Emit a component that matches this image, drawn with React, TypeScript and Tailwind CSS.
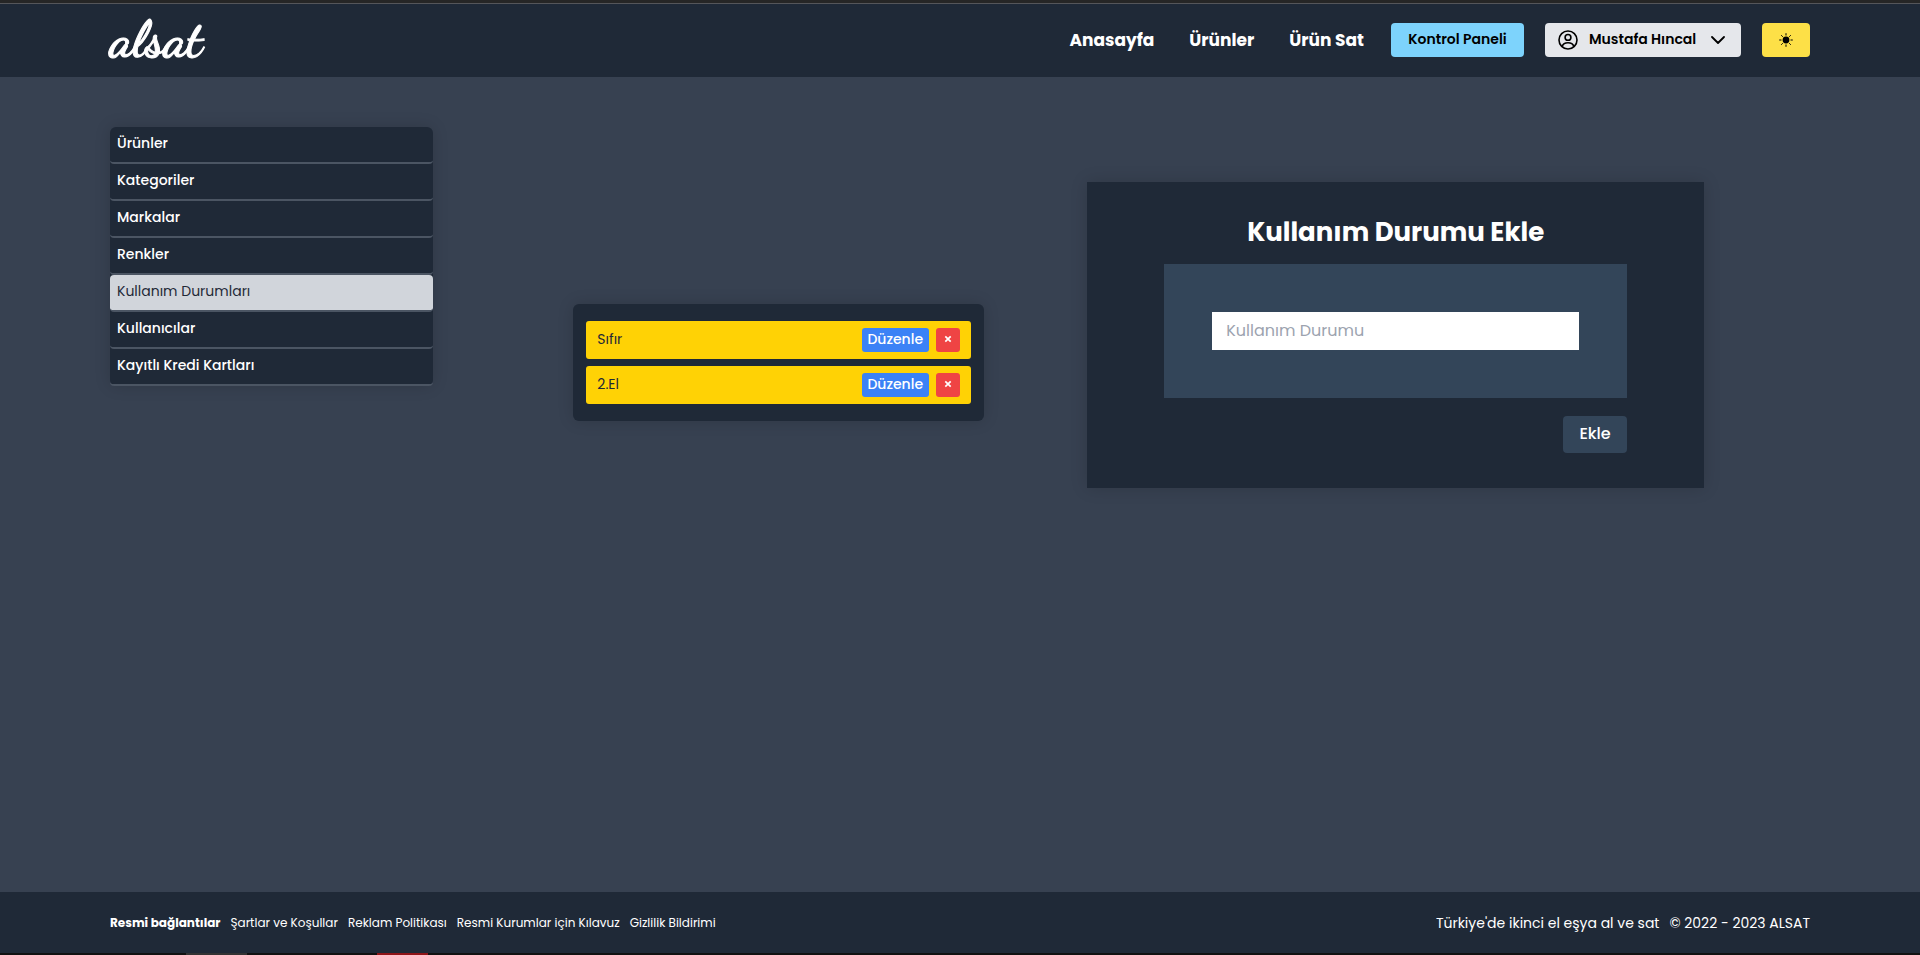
const menu = [
  'Ürünler',
  'Kategoriler',
  'Markalar',
  'Renkler',
  'Kullanım Durumları',
  'Kullanıcılar',
  'Kayıtlı Kredi Kartları',
];
const activeItem = 'Kullanım Durumları';
const navLinks = ['Anasayfa', 'Ürünler', 'Ürün Sat'];
const conditions = ['Sıfır', '2.El'];
const officialLinks = [
  'Şartlar ve Koşullar',
  'Reklam Politikası',
  'Resmi Kurumlar için Kılavuz',
  'Gizlilik Bildirimi',
];

function UserIcon() {
  return (
    <svg viewBox="0 0 20 20" className="size-5 shrink-0" fill="none" stroke="currentColor" strokeWidth="1.6" aria-hidden="true">
      <circle cx="10" cy="10" r="9" />
      <circle cx="10" cy="7.4" r="2.9" />
      <path d="M4.2 16.4C5 13.9 7.2 12.8 10 12.8s5 1.1 5.8 3.6" />
    </svg>
  );
}

function ChevronIcon() {
  return (
    <svg viewBox="0 0 14 8" className="h-2 w-3.5 shrink-0" fill="none" stroke="currentColor" strokeWidth="1.8" strokeLinecap="round" strokeLinejoin="round" aria-hidden="true">
      <path d="M1 1l6 6 6-6" />
    </svg>
  );
}

function SunIcon() {
  return (
    <svg viewBox="0 0 14 14" className="size-3.5" fill="none" stroke="currentColor" strokeWidth="1" strokeLinecap="round" aria-hidden="true">
      <circle cx="7" cy="7" r="3.4" fill="currentColor" stroke="none" />
      <path d="M7 .6v1.5M7 11.9v1.5M.6 7h1.5M11.9 7h1.5M2.5 2.5l1 1M10.5 10.5l1 1M11.5 2.5l-1 1M3.5 10.5l-1 1" />
    </svg>
  );
}

function Header() {
  return (
    <header>
      <div className="h-[3px] bg-[#262626]" />
      <div className="flex h-[74px] items-center justify-between border-t border-[#55565a] bg-[#1f2937] px-[110px] pb-px">
        <a
          href="#"
          className="font-['Dancing_Script','Liberation_Serif',cursive] text-[52px] leading-[56px] font-bold text-white [-webkit-text-stroke:1px_white]"
        >
          alsat
        </a>
        <div className="flex items-center">
          <nav className="mr-[27px] flex gap-[35px] text-[17px] leading-7 font-bold text-white">
            {navLinks.map((l) => (
              <a key={l} href="#">{l}</a>
            ))}
          </nav>
          <div className="flex items-center gap-[21px] text-sm font-semibold text-black">
            <button className="h-[34px] w-[133px] rounded bg-[#7dd3fc] pb-0.5">Kontrol Paneli</button>
            <button className="flex h-[34px] w-[196px] items-center gap-[11px] rounded bg-[#e5e7eb] pr-4 pl-[13px]">
              <UserIcon />
              <span className="grow pb-0.5 text-left whitespace-nowrap">Mustafa Hıncal</span>
              <ChevronIcon />
            </button>
            <button aria-label="Tema" className="flex h-[34px] w-12 items-center justify-center rounded bg-[#fde047]">
              <SunIcon />
            </button>
          </div>
        </div>
      </div>
    </header>
  );
}

function Sidebar() {
  return (
    <nav className="w-[19%] rounded-md bg-[#1f2937] shadow-[0_0_16px_rgba(0,0,0,0.15)]">
      <ul>
        {menu.map((m) => (
          <li key={m}>
            <a
              href="#"
              className={
                m === activeItem
                  ? 'block h-[37px] rounded border-b-2 border-[#4b5563] bg-[#d1d5db] px-[7px] pt-1.5 text-sm text-[#1f2937]'
                  : 'block h-[37px] rounded border-b-2 border-[#4b5563] px-[7px] pt-1.5 text-sm font-medium text-white'
              }
            >
              {m}
            </a>
          </li>
        ))}
      </ul>
    </nav>
  );
}

function ConditionList() {
  return (
    <ul className="mx-auto mt-[177px] flex w-[66.5%] flex-col gap-[7px] rounded-md bg-[#1f2937] px-[13px] py-[17px] shadow-[0_0_16px_rgba(0,0,0,0.15)]">
      {conditions.map((c) => (
        <li key={c} className="flex h-[38px] items-center gap-[7px] rounded-[3px] bg-[#ffd205] px-[11px] text-sm text-[#1f2937]">
          <span className="grow pb-0.5">{c}</span>
          <button className="h-6 w-[67px] rounded-[3px] bg-[#3b82f6] pb-0.5 font-medium text-white">Düzenle</button>
          <button aria-label="Sil" className="flex size-6 items-center justify-center rounded-[3px] bg-[#ef4444] pb-0.5 text-white">
            <svg viewBox="0 0 8 8" className="size-2" stroke="currentColor" strokeWidth="1.7" aria-hidden="true">
              <path d="M1.3 1.3l5.4 5.4M6.7 1.3L1.3 6.7" />
            </svg>
          </button>
        </li>
      ))}
    </ul>
  );
}

function AddCondition() {
  return (
    <form className="mt-[55px] bg-[#1f2937] px-[12.5%] pt-8 pb-[35px] shadow-[0_0_16px_rgba(0,0,0,0.15)]">
      <h1 className="text-center text-[26px] leading-9 font-bold text-white">Kullanım Durumu Ekle</h1>
      <div className="mt-[14px] bg-[#334559] p-12">
        <input
          type="text"
          aria-label="Kullanım Durumu"
          placeholder="Kullanım Durumu"
          className="block h-[38px] w-full bg-white px-[14px] pb-0.5 text-base text-gray-800 placeholder:text-[#9ca3af]"
        />
      </div>
      <div className="mt-[18px] flex justify-end">
        <button type="button" className="h-[37px] w-16 rounded bg-[#334559] pb-0.5 text-base font-medium text-white">Ekle</button>
      </div>
    </form>
  );
}

function Footer() {
  return (
    <footer>
      <div className="flex h-[61px] items-center justify-between bg-[#1f2937] px-[110px] text-white">
        <div className="flex gap-[10px] text-xs">
          <span className="font-bold">Resmi bağlantılar</span>
          {officialLinks.map((l) => (
            <a key={l} href="#">{l}</a>
          ))}
        </div>
        <div className="flex gap-[10px] text-sm">
          <span>Türkiye'de ikinci el eşya al ve sat</span>
          <span>© 2022 - 2023 ALSAT</span>
        </div>
      </div>
      <div className="flex h-0.5 bg-[#111111] pl-[186px]">
        <div className="w-[61px] bg-[#333333]" />
        <div className="ml-[130px] w-[51px] bg-[#8f1418]" />
      </div>
    </footer>
  );
}

export default function App() {
  return (
    <div lang="tr" className="flex min-h-screen flex-col bg-[#374151] font-['Poppins','Inter',sans-serif]">
      <Header />
      <main className="flex grow items-start px-[110px] pt-[50px]">
        <Sidebar />
        <div className="ml-[37px] grid w-[72.6%] grid-cols-2 items-start">
          <ConditionList />
          <AddCondition />
        </div>
      </main>
      <Footer />
    </div>
  );
}
